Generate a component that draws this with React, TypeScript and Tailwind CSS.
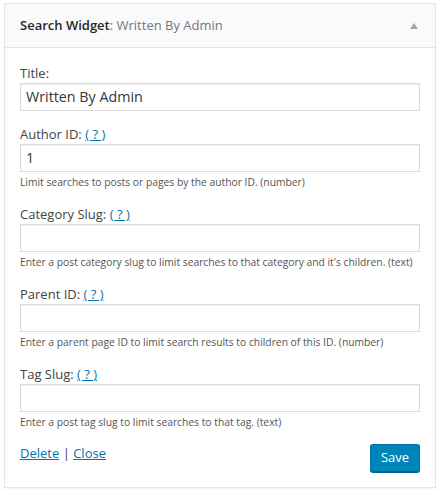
import React from "react";

const font = { fontFamily: '"Open Sans", "Noto Sans", sans-serif' };

function Field({ label, help, value, desc, first }: { label: string; help?: boolean; value?: string; desc?: string; first?: boolean }) {
  return (
    <div className={first ? "" : "mt-[14px]"}>
      <div className="text-[13px] leading-[18px] text-[#444]">
        {label}
        {help && (
          <>
            {" "}
            <a href="#" className="text-[#0073aa] underline">( ? )</a>
          </>
        )}
      </div>
      <div className="mt-[1px] h-[28px] w-full border border-[#ddd] bg-white shadow-[inset_0_1px_2px_rgba(0,0,0,0.07)] pl-[5px] flex items-center text-[14.3px] text-[#32373c]">
        {value}
      </div>
      {desc && <div className="mt-[2px] text-[10.3px] leading-[17px] text-[#555] whitespace-nowrap">{desc}</div>}
    </div>
  );
}

export default function App() {
  return (
    <div className="w-[441px] h-[494px] bg-white pt-[3px] pl-[4px]" style={font}>
      <div className="w-[432px] border border-[#e5e5e5] bg-white shadow-[0_1px_1px_rgba(0,0,0,0.04)]">
        <div className="h-[44px] bg-[#fafafa] border-b border-[#e5e5e5] flex items-center justify-between pl-[15px] pr-[17px]">
          <div className="text-[13px]">
            <span className="font-semibold text-[#23282d]">Search Widget</span>
            <span className="text-[#72777c]">: Written By Admin</span>
          </div>
          <svg width="8" height="6" viewBox="0 0 8 6" className="mt-[1px]">
            <polygon points="4,0 8,6 0,6" fill="#a0a5aa" />
          </svg>
        </div>
        <div className="px-[15px] pt-[16px] pb-[15px]">
          <Field first label="Title:" value="Written By Admin" />
          <Field label="Author ID:" help value="1" desc="Limit searches to posts or pages by the author ID. (number)" />
          <Field label="Category Slug:" help desc="Enter a post category slug to limit searches to that category and it's children. (text)" />
          <Field label="Parent ID:" help desc="Enter a parent page ID to limit search results to children of this ID. (number)" />
          <Field label="Tag Slug:" help desc="Enter a post tag slug to limit searches to that tag. (text)" />
          <div className="mt-[13px] flex items-start justify-between">
            <div className="text-[13px] leading-[18px] text-[#444]">
              <a href="#" className="text-[#0073aa] underline">Delete</a>
              {" | "}
              <a href="#" className="text-[#0073aa] underline">Close</a>
            </div>
            <button className="h-[28px] w-[50px] rounded-[3px] bg-[#0085ba] border border-[#0073aa] border-b-[#006799] shadow-[0_1px_0_#006799] text-white text-[13px]">
              Save
            </button>
          </div>
        </div>
      </div>
    </div>
  );
}
